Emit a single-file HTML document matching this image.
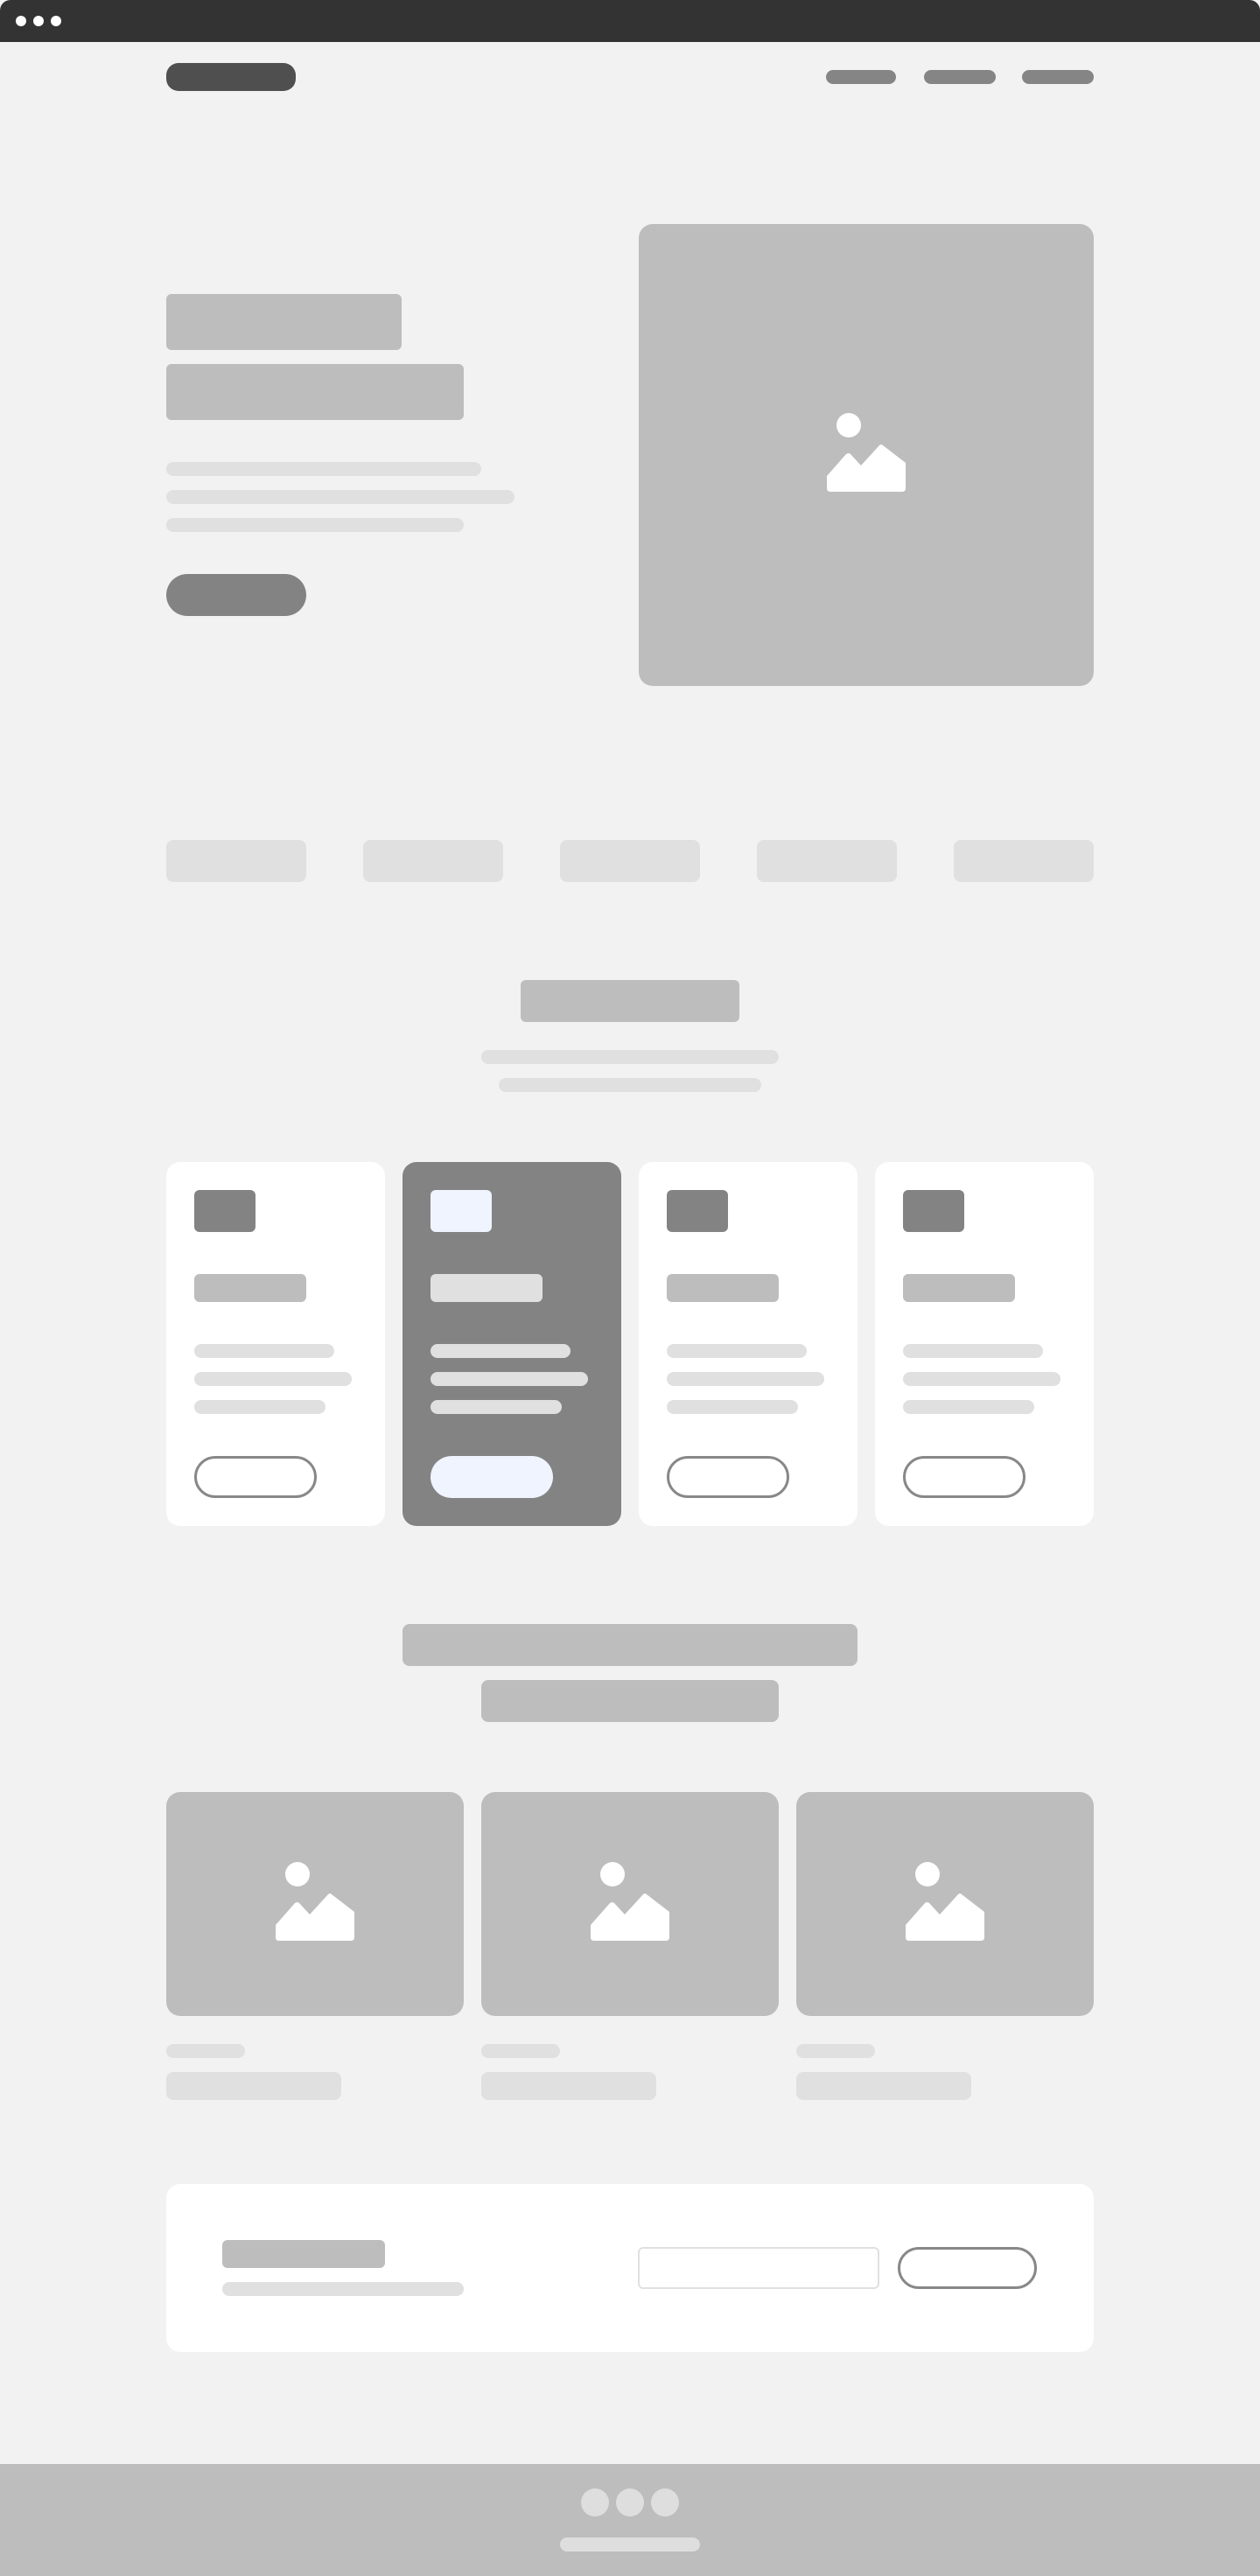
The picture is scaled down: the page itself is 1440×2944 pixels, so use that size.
<!DOCTYPE html>
<html><head><meta charset="utf-8"><style>
*{margin:0;padding:0;box-sizing:border-box}
body{width:1440px;height:2944px;background:#f2f2f2;position:relative;overflow:hidden;font-family:"Liberation Sans",sans-serif}
.a{position:absolute}
.top{left:0;top:0;width:1440px;height:48px;background:#333;border-radius:12px 12px 0 0}
.dot{width:12px;height:12px;border-radius:50%;background:#fff;top:18px}
.l{background:#e0e0e0;border-radius:8px}
.g{background:#bdbdbd}
.card{top:1328px;width:250px;height:416px;border-radius:16px;background:#fff}
.card .ic{position:absolute;left:32px;top:32px;width:70px;height:48px;border-radius:6px;background:#838383}
.card .t{position:absolute;left:32px;top:128px;width:128px;height:32px;border-radius:6px;background:#bdbdbd}
.card .r{position:absolute;left:32px;height:16px;border-radius:8px;background:#e0e0e0}
.card .b{position:absolute;left:32px;top:336px;width:140px;height:48px;border-radius:24px;border:3px solid #888}
.card.d{background:#838383}
.card.d .ic{background:#eff4ff}
.card.d .t{background:#e0e0e0}
.card.d .b{background:#eff4ff;border:none}
</style></head><body>
<div class="a top"></div>
<div class="a dot" style="left:18px"></div><div class="a dot" style="left:38px"></div><div class="a dot" style="left:58px"></div>
<div class="a" style="left:190px;top:72px;width:148px;height:32px;border-radius:14px;background:#4f4f4f"></div>
<div class="a" style="left:944px;top:80px;width:80px;height:16px;border-radius:8px;background:#858585"></div>
<div class="a" style="left:1056px;top:80px;width:82px;height:16px;border-radius:8px;background:#858585"></div>
<div class="a" style="left:1168px;top:80px;width:82px;height:16px;border-radius:8px;background:#858585"></div>

<div class="a g" style="left:190px;top:336px;width:269px;height:64px;border-radius:6px"></div>
<div class="a g" style="left:190px;top:416px;width:340px;height:64px;border-radius:6px"></div>
<div class="a l" style="left:190px;top:528px;width:360px;height:16px"></div>
<div class="a l" style="left:190px;top:560px;width:398px;height:16px"></div>
<div class="a l" style="left:190px;top:592px;width:340px;height:16px"></div>
<div class="a" style="left:190px;top:656px;width:160px;height:48px;border-radius:24px;background:#838383"></div>

<div class="a g" style="left:730px;top:256px;width:520px;height:528px;border-radius:16px">
<svg width="520" height="528" style="position:absolute;left:0;top:0"><g transform="translate(260,264)" fill="#fff"><circle cx="-20" cy="-34" r="14"/><path d="M-45 24 L-23 -1 Q-20 -3 -18 -1 L-6 12 L15 -11 Q17 -13 19 -11 L45 9 L45 38 Q45 42 41 42 L-41 42 Q-45 42 -45 38 Z"/></g></svg></div>

<div class="a l" style="left:190px;top:960px;width:160px;height:48px;border-radius:8px"></div>
<div class="a l" style="left:415px;top:960px;width:160px;height:48px;border-radius:8px"></div>
<div class="a l" style="left:640px;top:960px;width:160px;height:48px;border-radius:8px"></div>
<div class="a l" style="left:865px;top:960px;width:160px;height:48px;border-radius:8px"></div>
<div class="a l" style="left:1090px;top:960px;width:160px;height:48px;border-radius:8px"></div>

<div class="a g" style="left:595px;top:1120px;width:250px;height:48px;border-radius:6px"></div>
<div class="a l" style="left:550px;top:1200px;width:340px;height:16px"></div>
<div class="a l" style="left:570px;top:1232px;width:300px;height:16px"></div>

<div class="a card" style="left:190px"><div class="ic"></div><div class="t"></div><div class="r" style="top:208px;width:160px"></div><div class="r" style="top:240px;width:180px"></div><div class="r" style="top:272px;width:150px"></div><div class="b"></div></div>
<div class="a card d" style="left:460px"><div class="ic"></div><div class="t"></div><div class="r" style="top:208px;width:160px"></div><div class="r" style="top:240px;width:180px"></div><div class="r" style="top:272px;width:150px"></div><div class="b"></div></div>
<div class="a card" style="left:730px"><div class="ic"></div><div class="t"></div><div class="r" style="top:208px;width:160px"></div><div class="r" style="top:240px;width:180px"></div><div class="r" style="top:272px;width:150px"></div><div class="b"></div></div>
<div class="a card" style="left:1000px"><div class="ic"></div><div class="t"></div><div class="r" style="top:208px;width:160px"></div><div class="r" style="top:240px;width:180px"></div><div class="r" style="top:272px;width:150px"></div><div class="b"></div></div>

<div class="a g" style="left:460px;top:1856px;width:520px;height:48px;border-radius:8px"></div>
<div class="a g" style="left:550px;top:1920px;width:340px;height:48px;border-radius:8px"></div>

<div class="a g" style="left:190px;top:2048px;width:340px;height:256px;border-radius:16px"><svg width="340" height="256"><g transform="translate(170,128)" fill="#fff"><circle cx="-20" cy="-34" r="14"/><path d="M-45 24 L-23 -1 Q-20 -3 -18 -1 L-6 12 L15 -11 Q17 -13 19 -11 L45 9 L45 38 Q45 42 41 42 L-41 42 Q-45 42 -45 38 Z"/></g></svg></div>
<div class="a g" style="left:550px;top:2048px;width:340px;height:256px;border-radius:16px"><svg width="340" height="256"><g transform="translate(170,128)" fill="#fff"><circle cx="-20" cy="-34" r="14"/><path d="M-45 24 L-23 -1 Q-20 -3 -18 -1 L-6 12 L15 -11 Q17 -13 19 -11 L45 9 L45 38 Q45 42 41 42 L-41 42 Q-45 42 -45 38 Z"/></g></svg></div>
<div class="a g" style="left:910px;top:2048px;width:340px;height:256px;border-radius:16px"><svg width="340" height="256"><g transform="translate(170,128)" fill="#fff"><circle cx="-20" cy="-34" r="14"/><path d="M-45 24 L-23 -1 Q-20 -3 -18 -1 L-6 12 L15 -11 Q17 -13 19 -11 L45 9 L45 38 Q45 42 41 42 L-41 42 Q-45 42 -45 38 Z"/></g></svg></div>

<div class="a l" style="left:190px;top:2336px;width:90px;height:16px"></div>
<div class="a l" style="left:190px;top:2368px;width:200px;height:32px"></div>
<div class="a l" style="left:550px;top:2336px;width:90px;height:16px"></div>
<div class="a l" style="left:550px;top:2368px;width:200px;height:32px"></div>
<div class="a l" style="left:910px;top:2336px;width:90px;height:16px"></div>
<div class="a l" style="left:910px;top:2368px;width:200px;height:32px"></div>

<div class="a" style="left:190px;top:2496px;width:1060px;height:192px;border-radius:16px;background:#fff"></div>
<div class="a g" style="left:254px;top:2560px;width:186px;height:32px;border-radius:6px"></div>
<div class="a l" style="left:254px;top:2608px;width:276px;height:16px"></div>
<div class="a" style="left:729px;top:2568px;width:276px;height:48px;border-radius:6px;border:2px solid #e0e0e0;background:#fff"></div>
<div class="a" style="left:1026px;top:2568px;width:159px;height:48px;border-radius:24px;border:3px solid #888;background:#fff"></div>

<div class="a g" style="left:0;top:2816px;width:1440px;height:128px"></div>
<div class="a" style="left:664px;top:2844px;width:32px;height:32px;border-radius:50%;background:#dedede"></div>
<div class="a" style="left:704px;top:2844px;width:32px;height:32px;border-radius:50%;background:#dedede"></div>
<div class="a" style="left:744px;top:2844px;width:32px;height:32px;border-radius:50%;background:#dedede"></div>
<div class="a" style="left:640px;top:2900px;width:160px;height:16px;border-radius:8px;background:#dedede"></div>
</body></html>
